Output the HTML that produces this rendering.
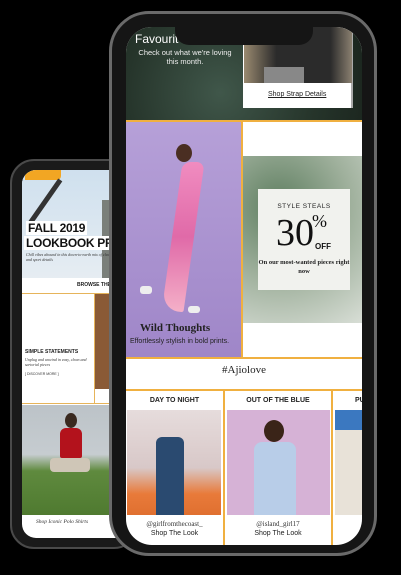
<!DOCTYPE html>
<html><head><style>
*{margin:0;padding:0;box-sizing:border-box}
body{width:401px;height:575px;background:#000;position:relative;overflow:hidden;font-family:"Liberation Sans",sans-serif}
.a{position:absolute}
.serif{font-family:"Liberation Serif",serif}
</style></head><body>
<!-- small phone -->
<div class="a" style="left:10px;top:159px;width:128px;height:390px;border-radius:24px;background:#1a1a1a;border:2px solid #4a4a4a"></div>
<div class="a" style="left:22px;top:170px;width:110px;height:368px;border-radius:14px;background:#fff;overflow:hidden">
  <div class="a" style="left:0;top:0;width:110px;height:118px;background:linear-gradient(#cfe0ee,#e8eef3)"></div>
  <div class="a" style="left:3px;top:0;width:36px;height:10px;background:#f2a623;border-radius:0 0 4px 0"></div>
  <div class="a" style="left:20px;top:5px;width:5px;height:55px;background:#333;transform:rotate(35deg)"></div>
  <div class="a" style="left:80px;top:30px;width:30px;height:80px;background:#7a7f7a"></div>
  <div class="a" style="left:4px;top:51px;font-weight:bold;font-size:12px;color:#111;background:#fff;padding:0 2px;letter-spacing:-.3px">FALL 2019</div>
  <div class="a" style="left:2px;top:66px;font-weight:bold;font-size:12px;color:#111;background:#fff;padding:0 2px;white-space:nowrap;letter-spacing:-.3px">LOOKBOOK PREVIE</div>
  <div class="a serif" style="left:4px;top:82px;font-size:4px;font-style:italic;color:#333;width:100px">Chill vibes abound in this down-to-earth mix of clean pieces and sport details</div>
  <div class="a" style="left:0;top:108px;width:110px;height:15px;background:#fff"></div>
  <div class="a" style="left:55px;top:112px;font-size:5px;font-weight:bold;color:#222;white-space:nowrap">BROWSE THE</div>
  <div class="a" style="left:0;top:123px;width:110px;height:1px;background:#e6b45a"></div>
  <div class="a" style="left:72px;top:124px;width:38px;height:95px;background:#8a5a36"></div>
  <div class="a" style="left:72px;top:124px;width:1px;height:110px;background:#e6b45a"></div>
  <div class="a" style="left:3px;top:179px;font-size:5px;font-weight:bold;color:#222">SIMPLE STATEMENTS</div>
  <div class="a serif" style="left:3px;top:187px;font-size:4px;font-style:italic;color:#333;width:65px">Unplug and unwind in easy, clean and sartorial pieces</div>
  <div class="a" style="left:3px;top:202px;font-size:3.5px;color:#333">[ DISCOVER MORE ]</div>
  <div class="a" style="left:0;top:233px;width:110px;height:1px;background:#e6b45a"></div>
  <div class="a" style="left:0;top:235px;width:110px;height:110px;background:linear-gradient(#bcc3c8 0%,#c6ccd0 45%,#5f8a3e 60%,#4f7a30 100%)"></div>
  <div class="a" style="left:38px;top:258px;width:22px;height:30px;background:#b3121c;border-radius:6px 6px 2px 2px"></div>
  <div class="a" style="left:43px;top:243px;width:12px;height:15px;background:#3a2a20;border-radius:50%"></div>
  <div class="a" style="left:28px;top:288px;width:40px;height:14px;background:#cfc6b7;border-radius:4px"></div>
  <div class="a" style="left:96px;top:235px;width:1px;height:133px;background:#e6b45a"></div>
  <div class="a serif" style="left:14px;top:349px;font-size:5.5px;font-style:italic;color:#333">Shop Iconic Polo Shirts</div>
</div>
<!-- big phone -->
<div class="a" style="left:109px;top:11px;width:268px;height:545px;border-radius:40px;background:#151515;border:3px solid #6a6a6a"></div>
<div class="a" style="left:126px;top:27px;width:236px;height:518px;border-radius:26px;background:#fff;overflow:hidden">
  <div class="a" style="left:0;top:0;width:236px;height:94px;background:radial-gradient(circle at 40% 70%,#40574a,#26352b 60%,#1a241d)"></div>
  <div class="a" style="left:9px;top:5px;font-size:12px;color:#fff">Favourit</div>
  <div class="a" style="left:9px;top:21px;font-size:7.5px;color:#eee;text-align:center;width:100px;line-height:9px">Check out what we're loving this month.</div>
  <div class="a" style="left:117px;top:0;width:110px;height:81px;background:#fff;border-right:2px solid #aaa"></div>
  <div class="a" style="left:118px;top:0;width:108px;height:56px;background:linear-gradient(90deg,#9a8a70,#2b2b2b 30%,#2b2b2b 80%,#8a8070)"></div>
  <div class="a" style="left:138px;top:40px;width:40px;height:16px;background:#888"></div>
  <div class="a" style="left:142px;top:64px;font-size:7px;color:#222;text-decoration:underline">Shop Strap Details</div>
  <div class="a" style="left:49px;top:0;width:138px;height:18px;background:#151515;border-radius:0 0 14px 14px"></div>
  <div class="a" style="left:0;top:93px;width:236px;height:2px;background:#f0b040"></div>
  <div class="a" style="left:0;top:95px;width:115px;height:235px;background:linear-gradient(#b6a0d8,#9f86c8)"></div>
  <div class="a" style="left:115px;top:95px;width:2px;height:235px;background:#f0b040"></div>
  <div class="a" style="left:50px;top:117px;width:16px;height:18px;background:#4a2e22;border-radius:50%"></div>
  <div class="a" style="left:46px;top:135px;width:22px;height:150px;background:linear-gradient(#f08cc0,#e06aa8 50%,#f4b0c8);border-radius:8px 8px 2px 20px;transform:skewX(-8deg)"></div>
  <div class="a" style="left:14px;top:259px;width:12px;height:8px;background:#eee;border-radius:3px"></div>
  <div class="a" style="left:62px;top:279px;width:12px;height:7px;background:#eee;border-radius:3px"></div>
  <div class="a serif" style="left:14px;top:295px;font-size:11px;font-weight:bold;color:#222">Wild Thoughts</div>
  <div class="a" style="left:4px;top:311px;font-size:7px;color:#222">Effortlessly stylish in bold prints.</div>
  <div class="a" style="left:117px;top:129px;width:119px;height:167px;background:radial-gradient(circle at 30% 30%,#5e7e60,#9fb09c 50%,#d8ded6)"></div>
  <div class="a" style="left:132px;top:162px;width:92px;height:101px;background:#f1f2ee"></div>
  <div class="a" style="left:132px;top:176px;width:92px;text-align:center;font-size:6.5px;color:#222;letter-spacing:.5px">STYLE STEALS</div>
  <div class="a serif" style="left:150px;top:186px;font-size:38px;color:#111;line-height:40px">30</div>
  <div class="a serif" style="left:186px;top:184px;font-size:18px;color:#111">%</div>
  <div class="a" style="left:189px;top:215px;font-size:8px;font-weight:bold;color:#111">OFF</div>
  <div class="a serif" style="left:132px;top:232px;width:92px;text-align:center;font-size:6.5px;font-weight:bold;color:#222;line-height:8.5px">On our most-wanted pieces right now</div>
  <div class="a" style="left:0;top:330px;width:236px;height:2px;background:#f0b040"></div>
  <div class="a serif" style="left:0;top:337px;width:236px;text-align:center;font-size:11px;color:#222">#Ajiolove</div>
  <div class="a" style="left:0;top:362px;width:236px;height:2px;background:#f0b040"></div>
  <div class="a" style="left:97px;top:362px;width:2px;height:160px;background:#f0b040"></div>
  <div class="a" style="left:205px;top:362px;width:2px;height:160px;background:#f0b040"></div>
  <div class="a" style="left:0;top:370px;width:97px;text-align:center;font-size:7px;font-weight:bold;color:#222">DAY TO NIGHT</div>
  <div class="a" style="left:99px;top:370px;width:106px;text-align:center;font-size:7px;font-weight:bold;color:#222">OUT OF THE BLUE</div>
  <div class="a" style="left:229px;top:370px;font-size:7px;font-weight:bold;color:#222">PU</div>
  <div class="a" style="left:1px;top:383px;width:94px;height:105px;background:linear-gradient(#e6dcdc,#d8c8c8 55%,#e87a3a 80%,#e07030)"></div>
  <div class="a" style="left:30px;top:410px;width:28px;height:78px;background:#2a4a70;border-radius:6px 6px 0 0"></div>
  <div class="a" style="left:101px;top:383px;width:103px;height:105px;background:#d6b2d6"></div>
  <div class="a" style="left:138px;top:393px;width:20px;height:22px;background:#3a2418;border-radius:50%"></div>
  <div class="a" style="left:128px;top:415px;width:42px;height:73px;background:#b8cde8;border-radius:8px 8px 0 0"></div>
  <div class="a" style="left:209px;top:383px;width:27px;height:105px;background:#e8e2d8"></div>
  <div class="a" style="left:209px;top:383px;width:27px;height:20px;background:#3b78c0"></div>
  <div class="a serif" style="left:0;top:493px;width:97px;text-align:center;font-size:7px;color:#333">@girlfromthecoast_</div>
  <div class="a" style="left:0;top:503px;width:97px;text-align:center;font-size:7px;color:#222">Shop The Look</div>
  <div class="a serif" style="left:99px;top:493px;width:106px;text-align:center;font-size:7px;color:#333">@island_girl17</div>
  <div class="a" style="left:99px;top:503px;width:106px;text-align:center;font-size:7px;color:#222">Shop The Look</div>
</div>
</body></html>
